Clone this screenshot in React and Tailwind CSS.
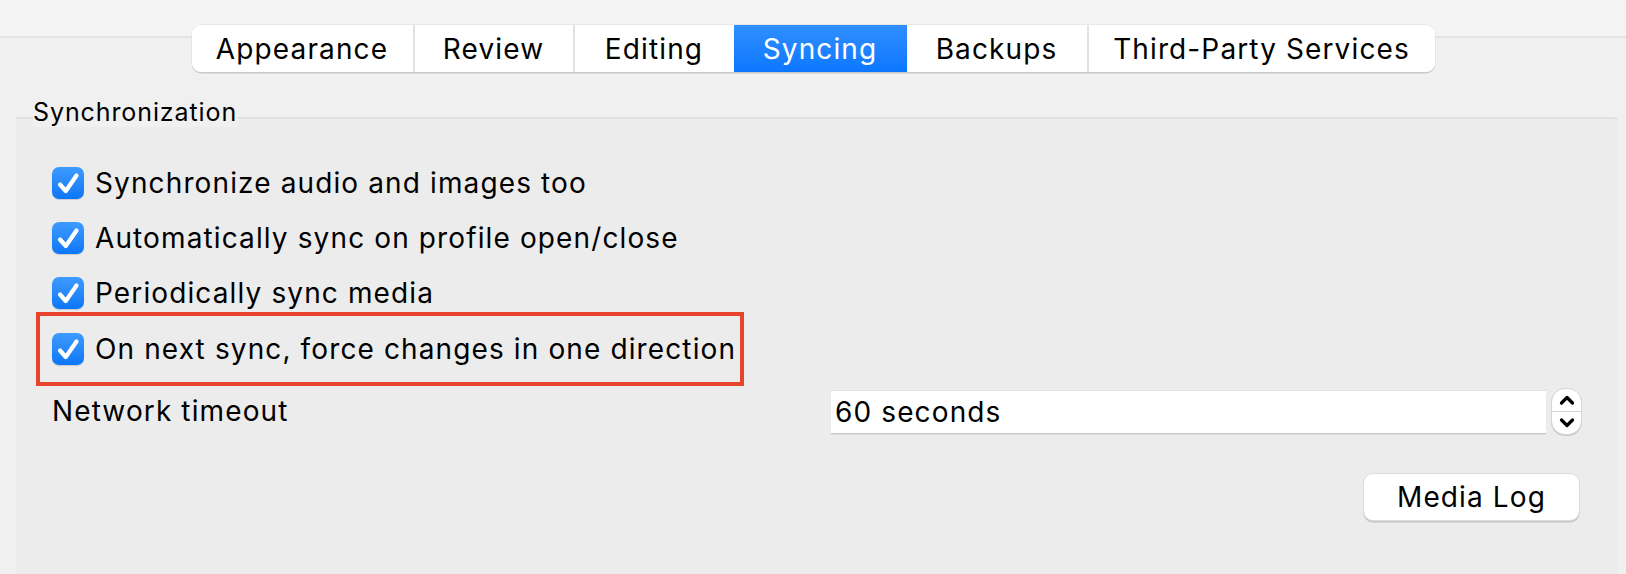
import React from "react";

const tabs = [
  { label: "Appearance", w: "w-[221px]" },
  { label: "Review", w: "w-[160px]" },
  { label: "Editing", w: "w-[161px]" },
  { label: "Syncing", w: "w-[173px]", active: true },
  { label: "Backups", w: "w-[180px]" },
  { label: "Third-Party Services", w: "w-[348px]" },
];

function Check() {
  return (
    <div className="w-[32px] h-[32px] shrink-0 rounded-[7px] bg-gradient-to-b from-[#3d9bff] to-[#0a76f6] shadow-[0_1px_1px_rgba(0,0,0,0.15)] flex items-center justify-center">
      <svg width="32" height="32" viewBox="0 0 32 32" fill="none">
        <path d="M8 17.5 L13.8 24 L24.5 8.5" stroke="white" strokeWidth="4.2" strokeLinecap="round" strokeLinejoin="round" />
      </svg>
    </div>
  );
}

function Row({ label, children }) {
  return (
    <div className="h-[55.3px] flex items-center gap-[11px] relative">
      <Check />
      <span>{label}</span>
      {children}
    </div>
  );
}

export default function App() {
  return (
    <div
      className="w-full h-[574px] bg-[#f4f4f4] overflow-hidden text-black text-[28px] leading-none tracking-[0.04em]"
      style={{ fontFamily: "Inter, 'Noto Sans', sans-serif" }}
    >
      <div className="pt-[25px] flex justify-center relative z-10">
        <div className="flex h-[47px] rounded-[9px] bg-white shadow-[0_1.5px_0_#c9c9c9,0_0_0_0.5px_#dcdcdc] overflow-hidden">
          {tabs.map((t, i) => (
            <div
              key={t.label}
              className={
                t.w +
                " flex items-center justify-center " +
                (t.active
                  ? "bg-gradient-to-b from-[#2f8fff] to-[#0a77ff] text-white"
                  : "bg-white text-black") +
                (i > 0 && !t.active && !tabs[i - 1].active ? " border-l-2 border-[#e2e2e2]" : "")
              }
            >
              {t.label}
            </div>
          ))}
        </div>
      </div>

      <div className="-mt-[36px] h-[538px] bg-[#f0f0f0] border-t-2 border-[#e3e3e3] pl-[16px] pr-[8px] pt-[59px]">
        <div className="relative z-10 ml-[17px] w-fit bg-[#f0f0f0] text-[25px] leading-[30px] tracking-[0.036em] pr-[1px] h-[30px]">
          Synchronization
        </div>
        <div className="-mt-[10px] h-[460px] bg-[#ececec] border-t-2 border-[#e0e0e0] rounded-tr-[4px] pl-[36px] pr-[36px] pt-[36px]">
          <Row label="Synchronize audio and images too" />
          <Row label="Automatically sync on profile open/close" />
          <Row label="Periodically sync media" />
          <Row label="On next sync, force changes in one direction">
            <div className="absolute -left-[16px] -top-[9px] w-[708px] h-[74px] border-4 border-[#e8432d] pointer-events-none" />
          </Row>

          <div className="mt-[13px] h-[44px] flex items-center">
            <div className="flex-1">Network timeout</div>
            <div className="w-[715px] h-[43px] bg-white border-t border-[#e2e2e2] shadow-[0_1.5px_0_#c8c8c8] flex items-center pl-[4px]">
              60 seconds
            </div>
            <div className="ml-[5px] w-[31px] h-[47px] rounded-[14px] bg-white border border-[#d6d6d6] shadow-[0_1px_0_#c8c8c8] flex flex-col items-center justify-center">
              <svg width="16" height="12" viewBox="0 0 16 12" fill="none" className="mt-[2px]">
                <path d="M2.5 9 L8 3.5 L13.5 9" stroke="black" strokeWidth="3.2" strokeLinecap="round" strokeLinejoin="round" />
              </svg>
              <div className="w-full h-[1px] bg-[#d8d8d8] my-[5px]" />
              <svg width="16" height="12" viewBox="0 0 16 12" fill="none" className="mb-[2px]">
                <path d="M2.5 3 L8 8.5 L13.5 3" stroke="black" strokeWidth="3.2" strokeLinecap="round" strokeLinejoin="round" />
              </svg>
            </div>
          </div>

          <div className="mt-[40px] flex justify-end pr-[2px]">
            <div className="w-[217px] h-[48px] rounded-[10px] bg-white border border-[#dcdcdc] shadow-[0_1.5px_0_#c6c6c6] flex items-center justify-center">
              Media Log
            </div>
          </div>
        </div>
      </div>
    </div>
  );
}
